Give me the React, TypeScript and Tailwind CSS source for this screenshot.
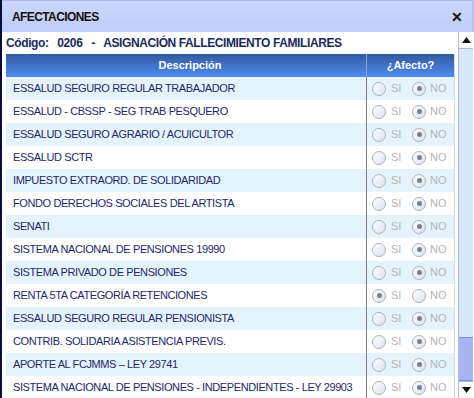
import React from "react";

const rows: { label: string; si: boolean }[] = [
  { label: "ESSALUD SEGURO REGULAR TRABAJADOR", si: false },
  { label: "ESSALUD - CBSSP - SEG TRAB PESQUERO", si: false },
  { label: "ESSALUD SEGURO AGRARIO / ACUICULTOR", si: false },
  { label: "ESSALUD SCTR", si: false },
  { label: "IMPUESTO EXTRAORD. DE SOLIDARIDAD", si: false },
  { label: "FONDO DERECHOS SOCIALES DEL ARTISTA", si: false },
  { label: "SENATI", si: false },
  { label: "SISTEMA NACIONAL DE PENSIONES 19990", si: false },
  { label: "SISTEMA PRIVADO DE PENSIONES", si: false },
  { label: "RENTA 5TA CATEGORÍA RETENCIONES", si: true },
  { label: "ESSALUD SEGURO REGULAR PENSIONISTA", si: false },
  { label: "CONTRIB. SOLIDARIA ASISTENCIA PREVIS.", si: false },
  { label: "APORTE AL FCJMMS – LEY 29741", si: false },
  { label: "SISTEMA NACIONAL DE PENSIONES - INDEPENDIENTES - LEY 29903", si: false },
];

function Radio({ checked }: { checked: boolean }) {
  return (
    <span className="w-[14px] h-[14px] rounded-full border border-[#a9b1c6] bg-gradient-to-br from-[#ffffff] to-[#dbe2ee] flex items-center justify-center shrink-0">
      {checked && <span className="w-[5px] h-[5px] rounded-full bg-[#7a7f8a]" />}
    </span>
  );
}

export default function App() {
  return (
    <div
      className="w-[474px] h-[398px] overflow-hidden flex flex-col bg-white border-l-2 border-[#0c0c3c]"
      style={{ fontFamily: '"Liberation Sans", Arial, sans-serif' }}
    >
      <div className="h-[32px] shrink-0 flex items-center justify-between pl-[10px] pr-[9px] bg-gradient-to-b from-[#cbd7fb] to-[#bfcdf7] border-t border-[#aebcea] border-r-2 border-r-[#b7c5f3]">
        <span className="text-[12px] font-bold text-[#111] tracking-[-0.6px]">AFECTACIONES</span>
        <span className="text-[14px] font-bold text-[#111] leading-none">✕</span>
      </div>
      <div className="flex flex-1 min-h-0">
        <div className="flex-1 min-w-0 flex flex-col pl-[4px] pr-[3px]">
          <div className="h-[22px] shrink-0 flex items-center text-[12px] font-bold text-[#1b2b58] whitespace-pre tracking-[-0.4px]">
            {"Código:   0206   -   ASIGNACIÓN FALLECIMIENTO FAMILIARES"}
          </div>
          <div className="border-r border-[#d4dbe8]">
            <div className="h-[23px] flex bg-gradient-to-b from-[#335aa0] to-[#4f8cf0] text-white text-[11px] font-bold">
              <div className="w-[361px] flex items-center justify-center border-r border-[#8aa2cc] pl-[8px]">Descripción</div>
              <div className="flex-1 flex items-center justify-center">¿Afecto?</div>
            </div>
            {rows.map((r, i) => (
              <div
                key={i}
                className={`h-[23px] flex text-[11px] ${i % 2 === 0 ? "bg-[#e5f3fd]" : "bg-white"}`}
              >
                <div className="w-[361px] flex items-center pl-[7px] text-[#1e2868] whitespace-nowrap border-r border-[#7d7d7d] tracking-[-0.4px]">
                  {r.label}
                </div>
                <div className="flex-1 flex items-center pl-[5px] text-[11px] text-[#b5b5b5]">
                  <Radio checked={r.si} />
                  <span className="ml-[5px] w-[21px]">SI</span>
                  <Radio checked={!r.si} />
                  <span className="ml-[4px]">NO</span>
                </div>
              </div>
            ))}
          </div>
        </div>
        <div className="w-[15px] shrink-0 flex flex-col bg-[#dbe8fb] border-l border-[#aebbe0] mr-[1px]">
          <div className="h-[17px] shrink-0 flex items-center justify-center bg-white border-b border-[#aebbe0]">
            <svg width="9" height="6" viewBox="0 0 9 6"><path d="M4.5 0 L9 6 L0 6 Z" fill="#111" /></svg>
          </div>
          <div className="flex-1 flex flex-col justify-end">
            <div className="h-[44px] bg-[#aab4f3] border-y border-[#7d8ad6]" />
          </div>
          <div className="h-[17px] shrink-0 flex items-center justify-center bg-white border-t border-[#aebbe0]">
            <svg width="9" height="6" viewBox="0 0 9 6"><path d="M0 0 L9 0 L4.5 6 Z" fill="#111" /></svg>
          </div>
        </div>
      </div>
    </div>
  );
}
